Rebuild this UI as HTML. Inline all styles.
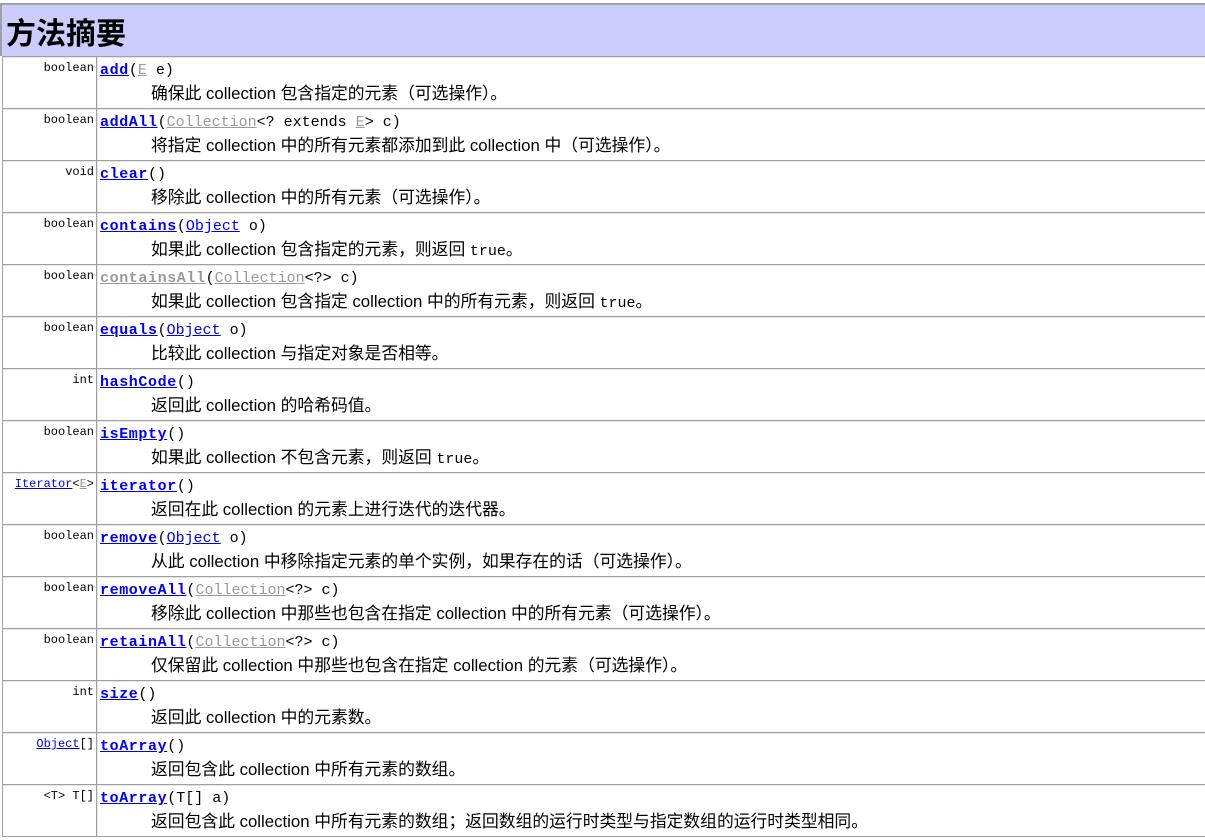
<!DOCTYPE html>
<html><head><meta charset="utf-8"><style>
body{margin:0;width:1205px;height:840px;background:#fff;position:relative;overflow:hidden;font-family:"Liberation Sans","Noto Sans CJK SC",sans-serif}
.hd{position:absolute;left:0;top:3px;width:1205px;height:53px;background:#ccccff;border-top:2px solid #a0a0a0;box-sizing:border-box;border-left:2px solid #a0a0a0}
.hd span{position:absolute;left:4px;top:4px;font-size:30px;font-weight:bold;color:#000;font-family:"Noto Sans CJK SC",sans-serif}
.row{position:absolute;left:2px;width:1203px;height:52px;border-top:1px solid #a0a0a0;box-shadow:inset 0 1px 0 #e4e4e4;border-left:1px solid #a0a0a0;box-sizing:border-box}
.row:before{content:"";position:absolute;left:93px;top:0;bottom:0;width:1px;background:#a0a0a0;box-shadow:1px 0 0 #e4e4e4}
.t{position:absolute;right:1111px;top:4px;font-family:"Liberation Mono",monospace;font-size:12px;color:#000;white-space:nowrap}
.m{position:absolute;left:97px;top:5px;font-family:"Liberation Mono",monospace;font-size:15px;white-space:nowrap;color:#000}
.m b{letter-spacing:0.6px}
.m b,.t a,.m a{color:#0000ee;text-decoration:underline}
.g{color:#999;text-decoration:underline}
.d{position:absolute;left:148px;top:23px;font-size:16.8px;white-space:nowrap;color:#000}
.d code{font-family:"Liberation Mono",monospace;font-size:15px}
.bot{position:absolute;left:2px;top:836px;width:1203px;height:1px;background:#a0a0a0}
</style></head><body>
<div class="hd"><span>方法摘要</span></div>

<div class="row" style="top:56px"><div class="t">boolean</div><div class="m"><b>add</b>(<span class="g">E</span> e)</div><div class="d">确保此 collection 包含指定的元素（可选操作）。</div></div>
<div class="row" style="top:108px"><div class="t">boolean</div><div class="m"><b>addAll</b>(<span class="g">Collection</span>&lt;? extends <span class="g">E</span>&gt; c)</div><div class="d">将指定 collection 中的所有元素都添加到此 collection 中（可选操作）。</div></div>
<div class="row" style="top:160px"><div class="t">void</div><div class="m"><b>clear</b>()</div><div class="d">移除此 collection 中的所有元素（可选操作）。</div></div>
<div class="row" style="top:212px"><div class="t">boolean</div><div class="m"><b>contains</b>(<a>Object</a> o)</div><div class="d">如果此 collection 包含指定的元素，则返回 <code>true</code>。</div></div>
<div class="row" style="top:264px"><div class="t">boolean</div><div class="m"><span class="g" style="font-weight:bold;letter-spacing:0.6px">containsAll</span>(<span class="g">Collection</span>&lt;?&gt; c)</div><div class="d">如果此 collection 包含指定 collection 中的所有元素，则返回 <code>true</code>。</div></div>
<div class="row" style="top:316px"><div class="t">boolean</div><div class="m"><b>equals</b>(<a>Object</a> o)</div><div class="d">比较此 collection 与指定对象是否相等。</div></div>
<div class="row" style="top:368px"><div class="t">int</div><div class="m"><b>hashCode</b>()</div><div class="d">返回此 collection 的哈希码值。</div></div>
<div class="row" style="top:420px"><div class="t">boolean</div><div class="m"><b>isEmpty</b>()</div><div class="d">如果此 collection 不包含元素，则返回 <code>true</code>。</div></div>
<div class="row" style="top:472px"><div class="t"><a>Iterator</a>&lt;<span class="g">E</span>&gt;</div><div class="m"><b>iterator</b>()</div><div class="d">返回在此 collection 的元素上进行迭代的迭代器。</div></div>
<div class="row" style="top:524px"><div class="t">boolean</div><div class="m"><b>remove</b>(<a>Object</a> o)</div><div class="d">从此 collection 中移除指定元素的单个实例，如果存在的话（可选操作）。</div></div>
<div class="row" style="top:576px"><div class="t">boolean</div><div class="m"><b>removeAll</b>(<span class="g">Collection</span>&lt;?&gt; c)</div><div class="d">移除此 collection 中那些也包含在指定 collection 中的所有元素（可选操作）。</div></div>
<div class="row" style="top:628px"><div class="t">boolean</div><div class="m"><b>retainAll</b>(<span class="g">Collection</span>&lt;?&gt; c)</div><div class="d">仅保留此 collection 中那些也包含在指定 collection 的元素（可选操作）。</div></div>
<div class="row" style="top:680px"><div class="t">int</div><div class="m"><b>size</b>()</div><div class="d">返回此 collection 中的元素数。</div></div>
<div class="row" style="top:732px"><div class="t"><a>Object</a>[]</div><div class="m"><b>toArray</b>()</div><div class="d">返回包含此 collection 中所有元素的数组。</div></div>
<div class="row" style="top:784px"><div class="t">&lt;T&gt; T[]</div><div class="m"><b>toArray</b>(T[] a)</div><div class="d">返回包含此 collection 中所有元素的数组；返回数组的运行时类型与指定数组的运行时类型相同。</div></div>
<div class="bot"></div>
</body></html>
